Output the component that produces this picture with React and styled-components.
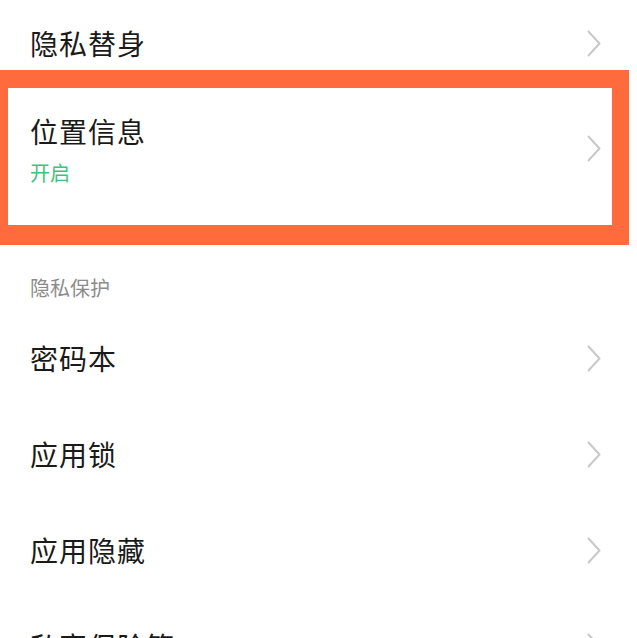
import React from "react";
import styled, { createGlobalStyle } from "styled-components";

const Global = createGlobalStyle`
  html, body { margin: 0; padding: 0; background: #ffffff; }
  body {
    font-family: "Noto Sans CJK SC", "Noto Sans", sans-serif;
    overflow: hidden;
  }
`;

const Page = styled.div`
  width: 637px;
  height: 638px;
  overflow: hidden;
  background: #ffffff;
  display: flex;
  flex-direction: column;
`;

const Row = styled.div`
  height: ${(p) => p.$h}px;
  padding: ${(p) => p.$pt || 0}px 36px 0 30px;
  box-sizing: border-box;
  display: flex;
  align-items: center;
  justify-content: space-between;
  flex-shrink: 0;
`;

const Texts = styled.div`
  display: flex;
  flex-direction: column;
  margin-top: 4px;
`;

const Title = styled.div`
  font-size: 28px;
  line-height: 34px;
  color: #1a1a1a;
  letter-spacing: 1px;
`;

const Sub = styled.div`
  font-size: 20px;
  line-height: 26px;
  color: #3cc47c;
  margin-top: 12px;
`;

const Highlight = styled.div`
  width: 629px;
  box-sizing: border-box;
  border-style: solid;
  border-color: #ff6b3d;
  border-width: 18px 17px 20px 8px;
  flex-shrink: 0;
`;

const HighlightRow = styled.div`
  height: 137px;
  box-sizing: border-box;
  padding: 0 11px 17px 22px;
  display: flex;
  align-items: center;
  justify-content: space-between;
`;

const Section = styled.div`
  height: 65px;
  padding: 19px 0 0 30px;
  box-sizing: border-box;
  display: flex;
  align-items: center;
  font-size: 20px;
  color: #8c8c8c;
  flex-shrink: 0;
`;

const Chevron = () => (
  <svg width="14" height="27" viewBox="0 0 14 27" fill="none">
    <path d="M1.5 1.5 L12.5 13.5 L1.5 25.5" stroke="#c8c8c8" strokeWidth="2" strokeLinecap="round" strokeLinejoin="round" />
  </svg>
);

export default function App() {
  return (
    <Page>
      <Global />
      <Row $h={70} $pt={16}>
        <Title>隐私替身</Title>
        <Chevron />
      </Row>
      <Highlight>
        <HighlightRow>
          <Texts>
            <Title>位置信息</Title>
            <Sub>开启</Sub>
          </Texts>
          <Chevron />
        </HighlightRow>
      </Highlight>
      <Section>隐私保护</Section>
      <Row $h={96} $pt={0}>
        <Title>密码本</Title>
        <Chevron />
      </Row>
      <Row $h={96}>
        <Title>应用锁</Title>
        <Chevron />
      </Row>
      <Row $h={96}>
        <Title>应用隐藏</Title>
        <Chevron />
      </Row>
      <Row $h={96}>
        <Title>私密保险箱</Title>
        <Chevron />
      </Row>
    </Page>
  );
}
